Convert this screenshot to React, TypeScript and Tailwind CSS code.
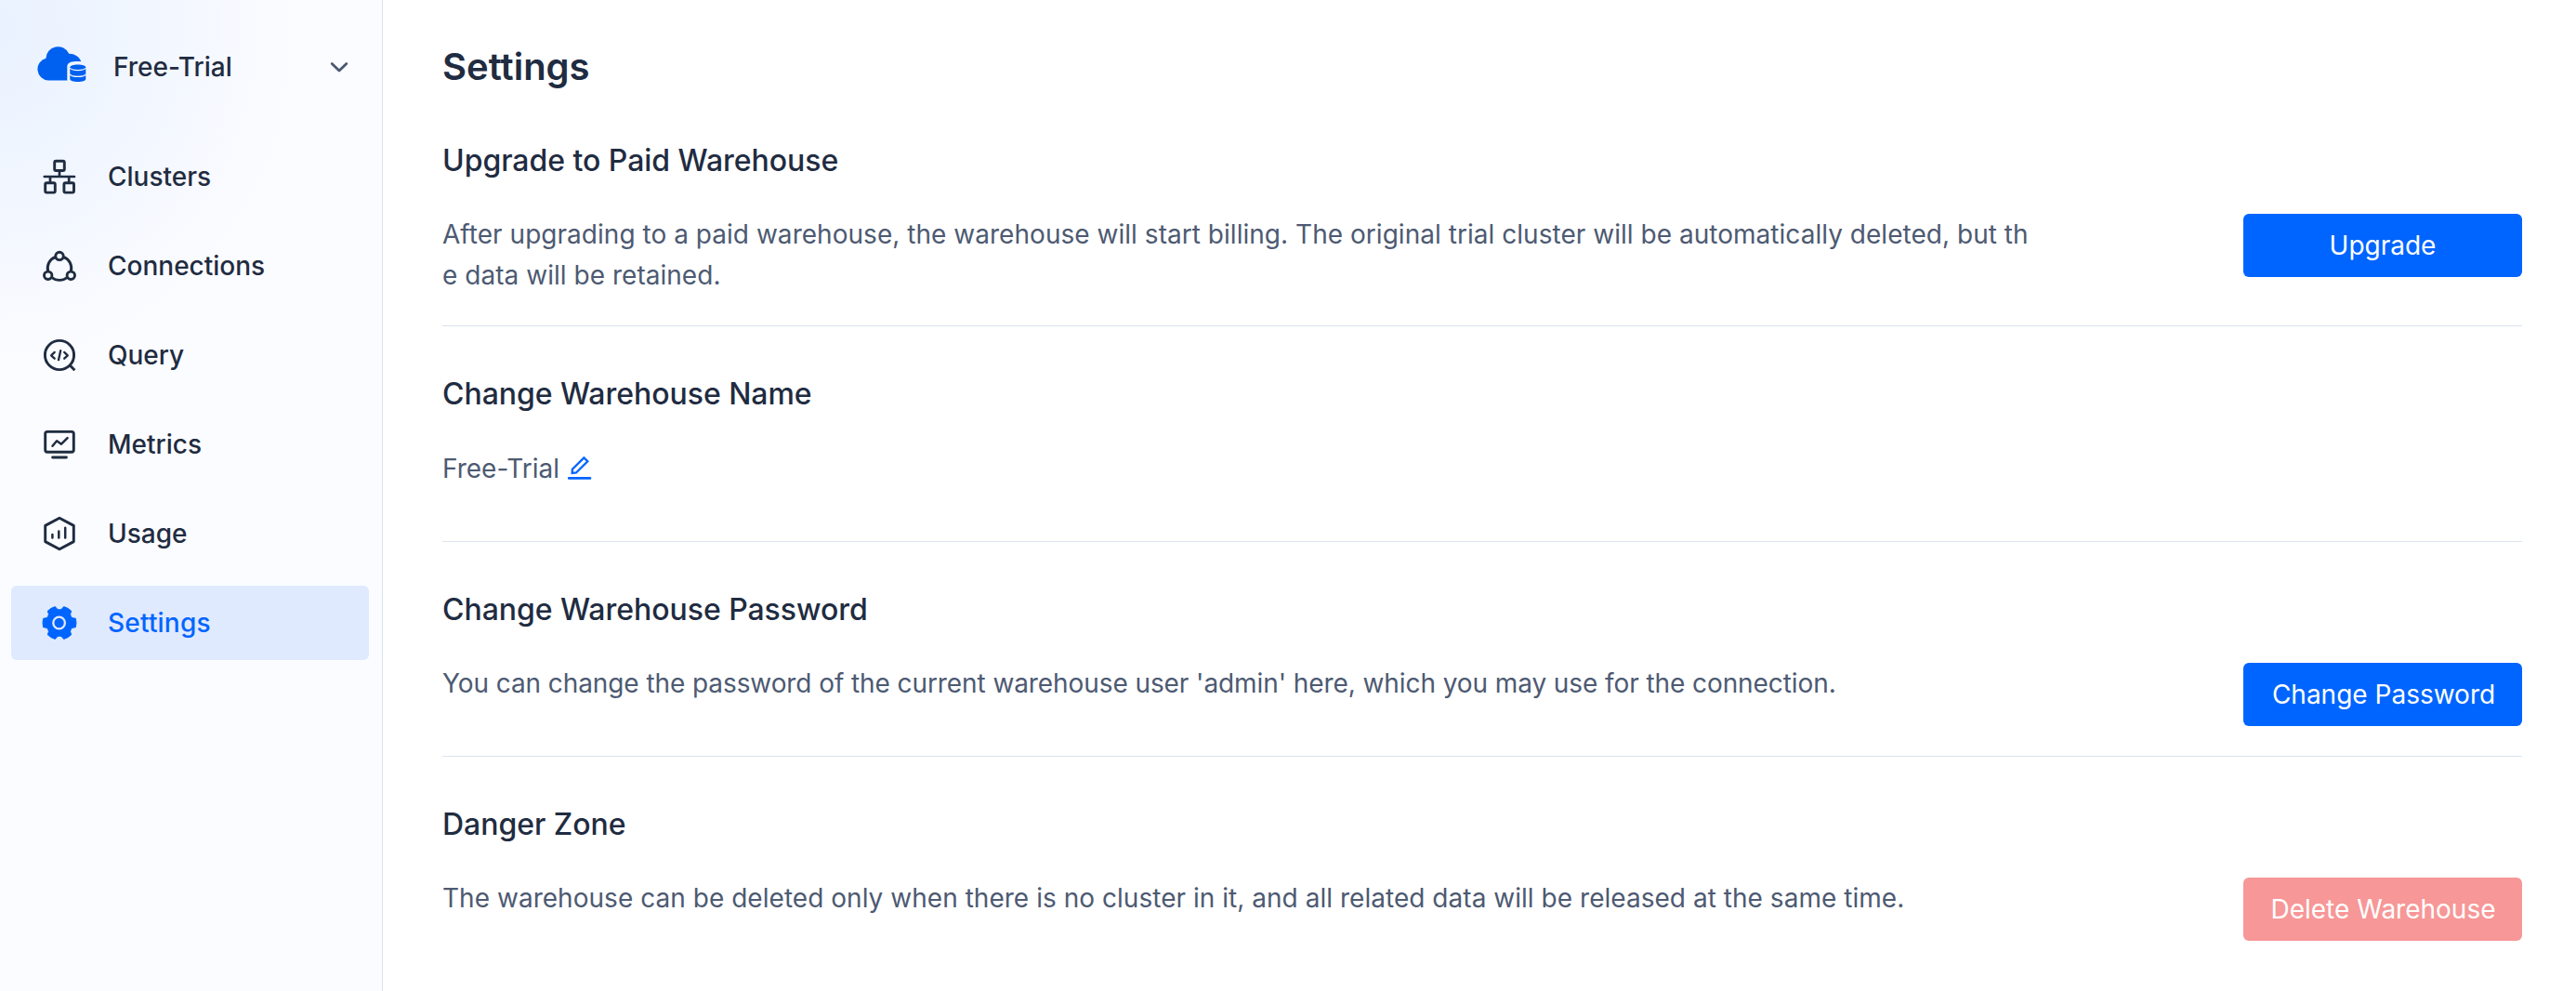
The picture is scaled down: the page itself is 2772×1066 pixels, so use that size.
import React from 'react';

function gearPath() {
  const point = (radius: number, degrees: number) => {
    const a = (degrees * Math.PI) / 180;
    return `${(20 + radius * Math.cos(a)).toFixed(2)} ${(20 + radius * Math.sin(a)).toFixed(2)}`;
  };
  let d = '';
  for (let k = 0; k < 6; k++) {
    const a = k * 60;
    d += `${k ? 'L' : 'M'}${point(18, a - 15)} A19 19 0 0 1 ${point(18, a + 15)} `;
    d += `L${point(14.9, a + 21)} Q${point(13.4, a + 30)} ${point(14.9, a + 39)} `;
  }
  return d + 'Z';
}

const stroke = {
  width: 40,
  height: 40,
  viewBox: '0 0 40 40',
  fill: 'none',
  stroke: 'currentColor',
  strokeWidth: 2.9,
  strokeLinecap: 'round',
  strokeLinejoin: 'round',
} as const;

const ClustersIcon = () => (
  <svg {...stroke}>
    <rect x="14.7" y="3.3" width="10.6" height="10.2" rx="1.5" />
    <rect x="4.7" y="26.7" width="10.6" height="10.4" rx="1.5" />
    <rect x="24.9" y="26.7" width="10.6" height="10.4" rx="1.5" />
    <path d="M3.8 20H36M20 14v6M10 20v6M30.2 20v6" strokeWidth="2.7" />
  </svg>
);

const ConnectionsIcon = () => (
  <svg {...stroke}>
    <circle cx="20" cy="9.4" r="4.2" />
    <circle cx="7.7" cy="30.3" r="4.2" />
    <circle cx="32.3" cy="30.3" r="4.2" />
    <path d="M16 10.3A12.8 12.8 0 0 0 7.7 26M24 10.3A12.8 12.8 0 0 1 32.3 26M11.9 32.5A12.8 12.8 0 0 0 28.1 32.5" strokeLinecap="butt" />
  </svg>
);

const QueryIcon = () => (
  <svg {...stroke}>
    <circle cx="20" cy="20" r="15.6" />
    <path d="M31.5 31.3l4.9 4.9" strokeLinecap="butt" />
    <path d="M14.7 16.9l-3.6 3.4 3.6 3.4M25.2 16.9l3.6 3.4-3.6 3.4M21.2 15.2l-2.2 10" strokeWidth="2.3" />
  </svg>
);

const MetricsIcon = () => (
  <svg {...stroke}>
    <rect x="4.7" y="6.4" width="30.6" height="21.9" rx="2.2" />
    <path d="M12.6 34H27.4" />
    <path d="M12.5 21.7l4.6-5.4 4.9 3.4 6.6-6.6" strokeWidth="2.5" />
  </svg>
);

const UsageIcon = () => (
  <svg {...stroke}>
    <path d="M20 3.2L35.3 11.4V28.6L20 36.8L4.7 28.6V11.4Z" />
    <path d="M12.4 21v3.4M19.3 17.4v7M26.2 13.8v10.6" strokeWidth="2.5" />
  </svg>
);

const SettingsIcon = () => (
  <svg width="40" height="40" viewBox="0 0 40 40">
    <path d={gearPath()} fill="currentColor" stroke="currentColor" strokeWidth="1" strokeLinejoin="round" />
    <circle cx="19.6" cy="20" r="6.3" fill="none" stroke="#e0eafe" strokeWidth="2.3" />
  </svg>
);

const LogoIcon = () => (
  <svg className="-mt-1 shrink-0" width="54" height="40" viewBox="0 0 54 40" fill="#0060f0">
    <path d="M12 36.4A12 12 0 0 1 9.4 12.8A13 13 0 0 1 34.2 7.7C40 7.8 45.2 10.6 47.3 16.2C44 15.9 42 15.9 39 16.3C34.5 16.8 32.3 18.6 32.3 22V36.4Z" />
    <path d="M35.3 22.2C35.3 20.5 39.1 19.4 43.8 19.4S52.3 20.5 52.3 22.2V35C52.3 36.9 48.5 38 43.8 38S35.3 36.9 35.3 35Z" />
    <path d="M35 23.2C36.8 25 40 25.6 43.8 25.6S50.8 25 52.6 23.2M35 30C36.8 31.8 40 32.4 43.8 32.4S50.8 31.8 52.6 30" fill="none" stroke="#f4f8ff" strokeWidth="1.1" />
  </svg>
);

const PencilIcon = () => (
  <svg width="26" height="28" viewBox="0 0 26 28" fill="none" stroke="#0065ff" strokeWidth="2.3">
    <path d="M17.4 2.4L21.3 6.2L9 18.5L4.7 18.9L4.9 14.8Z" />
    <path d="M1 24.4H24" strokeWidth="2.6" strokeLinecap="round" />
  </svg>
);

const items = [
  { label: 'Clusters', Icon: ClustersIcon },
  { label: 'Connections', Icon: ConnectionsIcon },
  { label: 'Query', Icon: QueryIcon },
  { label: 'Metrics', Icon: MetricsIcon },
  { label: 'Usage', Icon: UsageIcon },
  { label: 'Settings', Icon: SettingsIcon, active: true },
];

function Sidebar() {
  return (
    <aside className="flex w-[412px] shrink-0 flex-col border-r border-[#dde3ec] bg-[#fbfcff] bg-[radial-gradient(ellipse_330px_370px_at_0px_30px,#e9f2ff_0%,#f1f6ff_45%,#fbfcff_100%)] font-medium">
      <div className="flex h-[142px] items-center pt-0.5 pr-[35px] pl-10">
        <LogoIcon />
        <span className="ml-7 flex-1">Free-Trial</span>
        <svg className="mt-0.5" width="22" height="22" viewBox="0 0 22 22" fill="none" stroke="#4b5870" strokeWidth="2.8" strokeLinecap="round" strokeLinejoin="round">
          <path d="M3.2 6.4l7.8 7.6 7.8-7.6" />
        </svg>
      </div>
      <nav className="mt-2 flex flex-col gap-4 pr-3.5 pl-3">
        {items.map(({ label, Icon, active }) => (
          <a
            key={label}
            className={
              active
                ? 'flex h-20 items-center gap-8 rounded-md bg-[#e0eafe] pl-8 tracking-[0.2px] text-[#0065ff]'
                : 'flex h-20 items-center gap-8 rounded-md pl-8'
            }
          >
            <Icon />
            {label}
          </a>
        ))}
      </nav>
    </aside>
  );
}

function Section({ title, children }: { title: string; children: React.ReactNode }) {
  return (
    <section className="border-b border-[#dbe3f0] pt-[49px] pb-8 last:border-b-0">
      <h2 className="text-[32px] leading-[48px] font-medium tracking-[-0.04px]">{title}</h2>
      <div className="mt-[33px] flex items-start justify-between text-[#4d5a72]">{children}</div>
    </section>
  );
}

const primary = 'h-[68px] w-[300px] rounded-md bg-[#0065ff] text-white';
const danger = 'h-[68px] w-[300px] rounded-md bg-[#f79797] pl-px text-white';

export default function App() {
  return (
    <div className="flex h-[1066px] bg-white font-['Inter',sans-serif] text-[28px] leading-[44px] text-[#1f2c41]">
      <Sidebar />
      <main className="flex-1 pt-11 pr-[58px] pl-16">
        <h1 className="text-[40px] leading-[56px] font-semibold">Settings</h1>
        <Section title="Upgrade to Paid Warehouse">
          <p className="w-[1716px] tracking-[0.032px] break-all">
            After upgrading to a paid warehouse, the warehouse will start billing. The original trial cluster will be
            automatically deleted, but the data will be retained.
          </p>
          <button className={primary}>Upgrade</button>
        </Section>
        <Section title="Change Warehouse Name">
          <div className="flex h-[69px] items-start gap-[9px] pt-px">
            <span>Free-Trial</span>
            <span className="mt-2">
              <PencilIcon />
            </span>
          </div>
        </Section>
        <Section title="Change Warehouse Password">
          <p className="tracking-[-0.085px]">
            You can change the password of the current warehouse user 'admin' here, which you may use for the
            connection.
          </p>
          <button className={primary}>
            <span className="pl-0.5">Change Password</span>
          </button>
        </Section>
        <Section title="Danger Zone">
          <p className="tracking-[0.032px]">
            The warehouse can be deleted only when there is no cluster in it, and all related data will be released at
            the same time.
          </p>
          <button className={danger}>Delete Warehouse</button>
        </Section>
      </main>
    </div>
  );
}
